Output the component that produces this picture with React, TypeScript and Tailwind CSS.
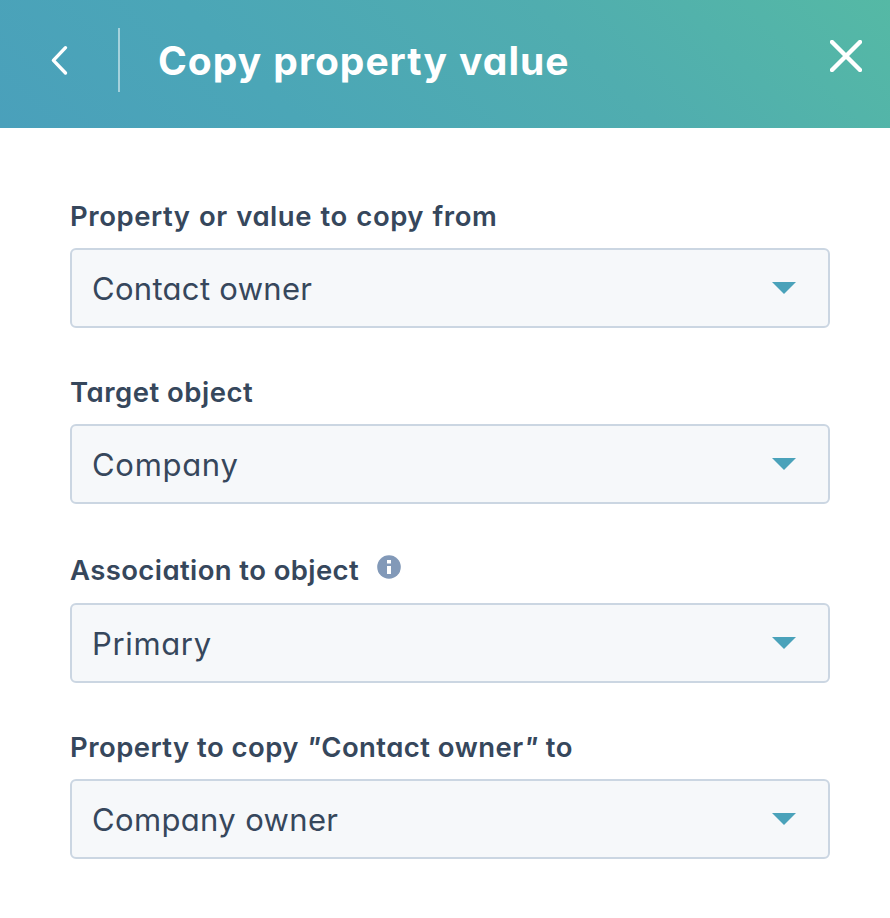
import React from "react";

interface FieldProps {
  label: React.ReactNode;
  labelSpacing: string;
  value: string;
  valueSpacing: string;
  className: string;
  info?: boolean;
}

function InfoIcon() {
  return (
    <svg width="24" height="24" viewBox="0 0 24 24" className="mb-1.5 ml-[18px]" aria-hidden="true">
      <circle cx="12" cy="12" r="11.8" fill="#8299b8" />
      <path d="M10 5h4v3.5h-4zM10 11h4v8h-4z" fill="#fff" />
    </svg>
  );
}

function Field({ label, labelSpacing, value, valueSpacing, className, info }: FieldProps) {
  return (
    <div className={className}>
      <div className="flex h-9 items-center">
        <label className={`whitespace-nowrap text-[27.5px] leading-9 font-semibold ${labelSpacing}`}>{label}</label>
        {info && <InfoIcon />}
      </div>
      <button
        type="button"
        className={`${info ? "mt-[15px]" : "mt-[14px]"} flex h-20 w-full items-center justify-between rounded-md border-2 border-[#cbd6e2] bg-[#f6f8fa] pr-8 pl-5 text-left`}
      >
        <span className={`pt-0.5 text-[31px] leading-10 font-normal whitespace-nowrap ${valueSpacing}`}>{value}</span>
        <svg width="24" height="12" viewBox="0 0 24 12" aria-hidden="true">
          <path d="M0 0h24L12 12z" fill="#4aa2ba" />
        </svg>
      </button>
    </div>
  );
}

export default function App() {
  return (
    <div className="h-[918px] w-[890px] overflow-hidden bg-white font-['Inter',sans-serif] text-[#36475c] [font-feature-settings:'cv11']">
      <header className="flex h-32 items-start bg-[linear-gradient(45deg,#4aa0bb_0%,#4ba6b7_30%,#50adaf_65%,#55b9a5_100%)] text-white">
        <button type="button" aria-label="Back" className="mt-[45px] ml-[50px] h-[31px] w-5">
          <svg width="20" height="31" viewBox="0 0 20 31" fill="none" stroke="currentColor" strokeWidth="3.4" strokeLinecap="round" strokeLinejoin="round">
            <path d="M15.5 2.7 3.4 15.4l12.1 12.6" />
          </svg>
        </button>
        <div className="mt-7 ml-12 h-16 w-0.5 bg-white/50" />
        <h1 className="mt-9 ml-[38px] text-[39px] leading-[50px] font-bold whitespace-nowrap tracking-[1px] [word-spacing:1px]">Copy property value</h1>
        <button type="button" aria-label="Close" className="mt-10 mr-7 ml-auto h-8 w-8">
          <svg width="32" height="32" viewBox="0 0 32 32" fill="none" stroke="currentColor" strokeWidth="4.4" strokeLinecap="round">
            <path d="M2 2l28 28M30 2 2 30" />
          </svg>
        </button>
      </header>
      <main className="pr-[60px] pl-[70px]">
        <Field className="pt-[70px]" label="Property or value to copy from" labelSpacing="tracking-[0.55px] [word-spacing:1px]" value="Contact owner" valueSpacing="tracking-[0.3px]" />
        <Field className="pt-[46px]" label="Target object" labelSpacing="tracking-[0.5px]" value="Company" valueSpacing="tracking-[0.7px]" />
        <Field className="pt-[48px]" label="Association to object" labelSpacing="tracking-[0.4px]" value="Primary" valueSpacing="tracking-[0.65px]" info />
        <Field
          className="pt-[46px]"
          label={
            <>
              Property to copy <i>"</i>Contact owner<i>"</i> to
            </>
          }
          labelSpacing="tracking-[0.45px]"
          value="Company owner"
          valueSpacing="tracking-[0.35px]"
        />
      </main>
    </div>
  );
}
